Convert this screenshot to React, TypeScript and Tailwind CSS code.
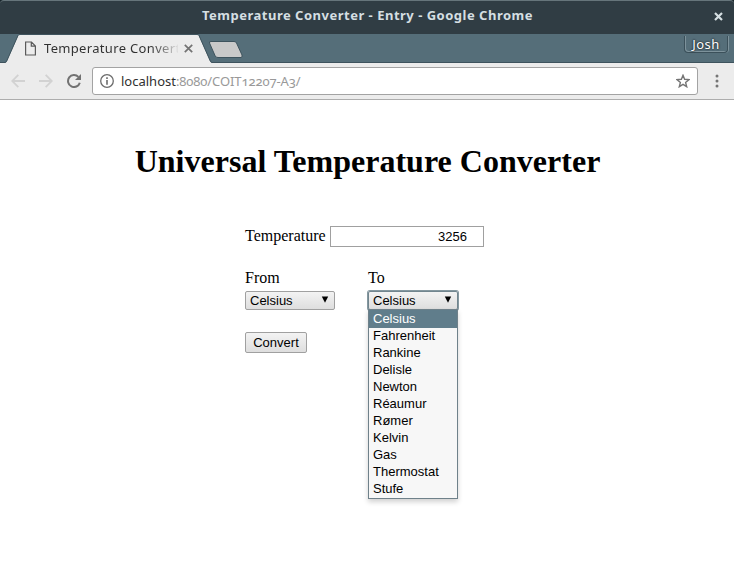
const units = ['Celsius', 'Fahrenheit', 'Rankine', 'Delisle', 'Newton', 'Réaumur', 'Rømer', 'Kelvin', 'Gas', 'Thermostat', 'Stufe'];

const uiFont = "font-['Noto_Sans','Open_Sans',sans-serif]";
const formFont = "font-['Liberation_Sans',Arial,sans-serif]";

function TitleBar() {
  return (
    <header className="relative flex h-[34px] items-center justify-center rounded-t-[4px] border-t border-[#66757b] bg-[#303d44] text-[#d5dfe2]">
      <h2 className="h-[34px] pl-px text-[13px] leading-[29px] font-bold tracking-[0.5px] whitespace-nowrap">
        Temperature Converter - Entry - Google Chrome
      </h2>
      <svg className="absolute top-[11px] right-[11px] h-[9px] w-[9px]" viewBox="0 0 9 9" fill="none" stroke="currentColor" strokeWidth="2.2">
        <path d="M1 1L8 8M8 1L1 8" />
      </svg>
    </header>
  );
}

function TabStrip() {
  return (
    <div className="relative flex h-[29px] bg-[#556e79] shadow-[inset_0_-1px_0_#3e535d]">
      <svg className="absolute top-0 left-0 h-[29px] w-[250px]" viewBox="0 0 250 29" fill="none">
        <path d="M5 29L6.500 28L18 2Q18.500 .8 20 .8H197Q198.500 .8 199 2L210.500 28L212 29Z" fill="#ececec" />
        <path d="M5 28.500L6.500 27.500L18 1.500Q18.500 .5 20 .5H197Q198.500 .5 199 1.500L210.500 27.500L212 28.500" stroke="#3e535d" />
        <path d="M211 7.500H234Q236 7.500 236.500 9L242 21Q242.500 23.500 241 23.500H218Q216 23.500 215.200 22L209.500 9Q209 7.500 211 7.500Z" fill="#c9c9c9" stroke="#3e535d" />
      </svg>
      <div className="relative flex w-[212px] items-center pl-[25px]">
        <svg className="h-[15px] w-[11px]" viewBox="0 0 11 15" fill="none" stroke="#5a5a5a" strokeWidth="1.200">
          <path d="M.6 1H6.500L10.400 5V14H.6ZM6.300 1V5.200H10.400" />
        </svg>
        <span className="ml-[8px] h-[29px] w-[134px] bg-linear-to-r from-[#303030] from-80% to-[#e0e0e0] bg-clip-text text-[13px] leading-[28px] tracking-[0.33px] whitespace-nowrap text-transparent">
          Temperature Convert
        </span>
        <svg className="ml-[6px] h-[9px] w-[9px]" viewBox="0 0 9 9" fill="none" stroke="#737373" strokeWidth="1.700">
          <path d="M.8 .8L8.200 8.200M8.200 .8L.8 8.200" />
        </svg>
      </div>
      <div className="relative mt-[2px] mr-[6px] ml-auto h-[17px] w-[44px] rounded-b-[4px] border border-t-0 border-[#3b505a] text-center text-[13px] leading-[17px] tracking-[0.4px] text-white shadow-[inset_1px_-1px_0_#7d929b,1px_0_0_#7d929b] [text-shadow:0_0_2px_#20272b,0_0_2px_#20272b]">
        Josh
      </div>
    </div>
  );
}

function Toolbar() {
  return (
    <nav className="flex h-[37px] items-center border-b border-[#adadad] bg-[#ececec] pl-[11px]">
      <svg className="h-[14px] w-[14px]" viewBox="0 0 14 14" fill="none" stroke="#d2d2d2" strokeWidth="1.800">
        <path d="M14 7H1.500M7.300 .8L1.200 7L7.300 13.200" />
      </svg>
      <svg className="ml-[14px] h-[14px] w-[14px]" viewBox="0 0 14 14" fill="none" stroke="#d2d2d2" strokeWidth="1.800">
        <path d="M0 7H12.500M6.700 .8L12.800 7L6.700 13.200" />
      </svg>
      <svg className="ml-[14px] h-[14px] w-[14px]" viewBox="0 0 14 14" fill="none">
        <path d="M12.800 8.700A6 6 0 1 1 11.400 2.900" stroke="#727272" strokeWidth="2" />
        <path d="M14 0V6H8Z" fill="#727272" />
      </svg>
      <div className="ml-[11px] flex h-[28px] w-[606px] items-center rounded-[3px] border border-[#a3a3a3] bg-white pr-[7px] pl-[7px]">
        <svg className="h-[14px] w-[14px]" viewBox="0 0 14 14" fill="none" stroke="#6c6c6c">
          <circle cx="7" cy="7" r="6.300" strokeWidth="1.300" />
          <path d="M7 6V10.700M7 3.300V4.900" strokeWidth="1.600" />
        </svg>
        <span className="ml-[7px] text-[13px] leading-[26px] tracking-[-0.1px] whitespace-nowrap text-[#999] oldstyle-nums">
          <span className="tracking-normal text-[#303030]">localhost</span>:8080/COIT12207-A3/
        </span>
        <svg className="ml-auto h-[14px] w-[14px]" viewBox="0 0 14 14" fill="none" stroke="#757575" strokeWidth="1.400">
          <path d="M7 1.300L8.600 5.300L13 5.600L9.600 8.400L10.700 12.700L7 10.300L3.300 12.700L4.400 8.400L1 5.600L5.400 5.300Z" />
        </svg>
      </div>
      <svg className="ml-[16.500px] h-[14px] w-[4px]" viewBox="0 0 4 14" fill="#757575">
        <circle cx="2" cy="2" r="1.500" />
        <circle cx="2" cy="7" r="1.500" />
        <circle cx="2" cy="12" r="1.500" />
      </svg>
    </nav>
  );
}

function SelectBox({ open }: { open?: boolean }) {
  return (
    <button
      type="button"
      className={`flex h-[19px] w-[90px] items-center rounded-[2px] border bg-linear-to-b from-[#f3f3f3] to-[#dedede] pr-[5px] pl-[4px] text-[13px] leading-[17px] ${formFont} ${open ? 'border-[#71858e] shadow-[0_0_0_1px_#8598a0]' : 'border-[#a0a0a0]'}`}
    >
      <span>Celsius</span>
      <svg className="ml-auto h-[7px] w-[8px] -translate-y-px" viewBox="0 0 8 7">
        <path d="M.8 .5H7.200L4 6.800Z" />
      </svg>
    </button>
  );
}

function Dropdown() {
  return (
    <ul className={`absolute top-[18px] left-0 h-[190px] w-[90px] border border-[#6f818a] bg-[#f7f7f7] text-[13px] leading-[17px] shadow-[0_3px_5px_rgba(0,0,0,0.18)] ${formFont}`}>
      {units.map((unit, i) => (
        <li key={unit} className={i === 0 ? '-mb-px h-[18px] bg-[#607d8b] pl-[4px] text-white' : 'h-[17px] pl-[4px]'}>
          {unit}
        </li>
      ))}
    </ul>
  );
}

export default function App() {
  return (
    <div className={`h-[575px] w-[734px] overflow-hidden bg-white ${uiFont}`}>
      <div className="bg-[#17242a]">
        <TitleBar />
      </div>
      <TabStrip />
      <Toolbar />
      <main className="font-['Liberation_Serif','Times_New_Roman',serif] text-base text-black">
        <h1 className="pt-[43px] pl-px text-center text-[32px] leading-[37px] font-bold tracking-[0.02px]">Universal Temperature Converter</h1>
        <form className="ml-[245px] pt-[46px]">
          <div className="flex h-[21px]">
            <label className="w-[85px] leading-[19px]">Temperature</label>
            <input
              className={`h-[21px] w-[154px] border border-[#a0a0a0] pr-[16px] text-right text-[13px] ${formFont}`}
              defaultValue="3256"
            />
          </div>
          <div className="mt-[22px] flex gap-[33px]">
            <div>
              <label className="block h-[22px] leading-[18px]">From</label>
              <SelectBox />
            </div>
            <div>
              <label className="block h-[22px] leading-[18px]">To</label>
              <div className="relative">
                <SelectBox open />
                <Dropdown />
              </div>
            </div>
          </div>
          <button type="button" className={`mt-[22px] block h-[21px] w-[62px] rounded-[2px] border border-[#a0a0a0] bg-linear-to-b from-[#f3f3f3] to-[#dedede] text-center text-[13px] leading-[19px] ${formFont}`}>
            Convert
          </button>
        </form>
      </main>
    </div>
  );
}
